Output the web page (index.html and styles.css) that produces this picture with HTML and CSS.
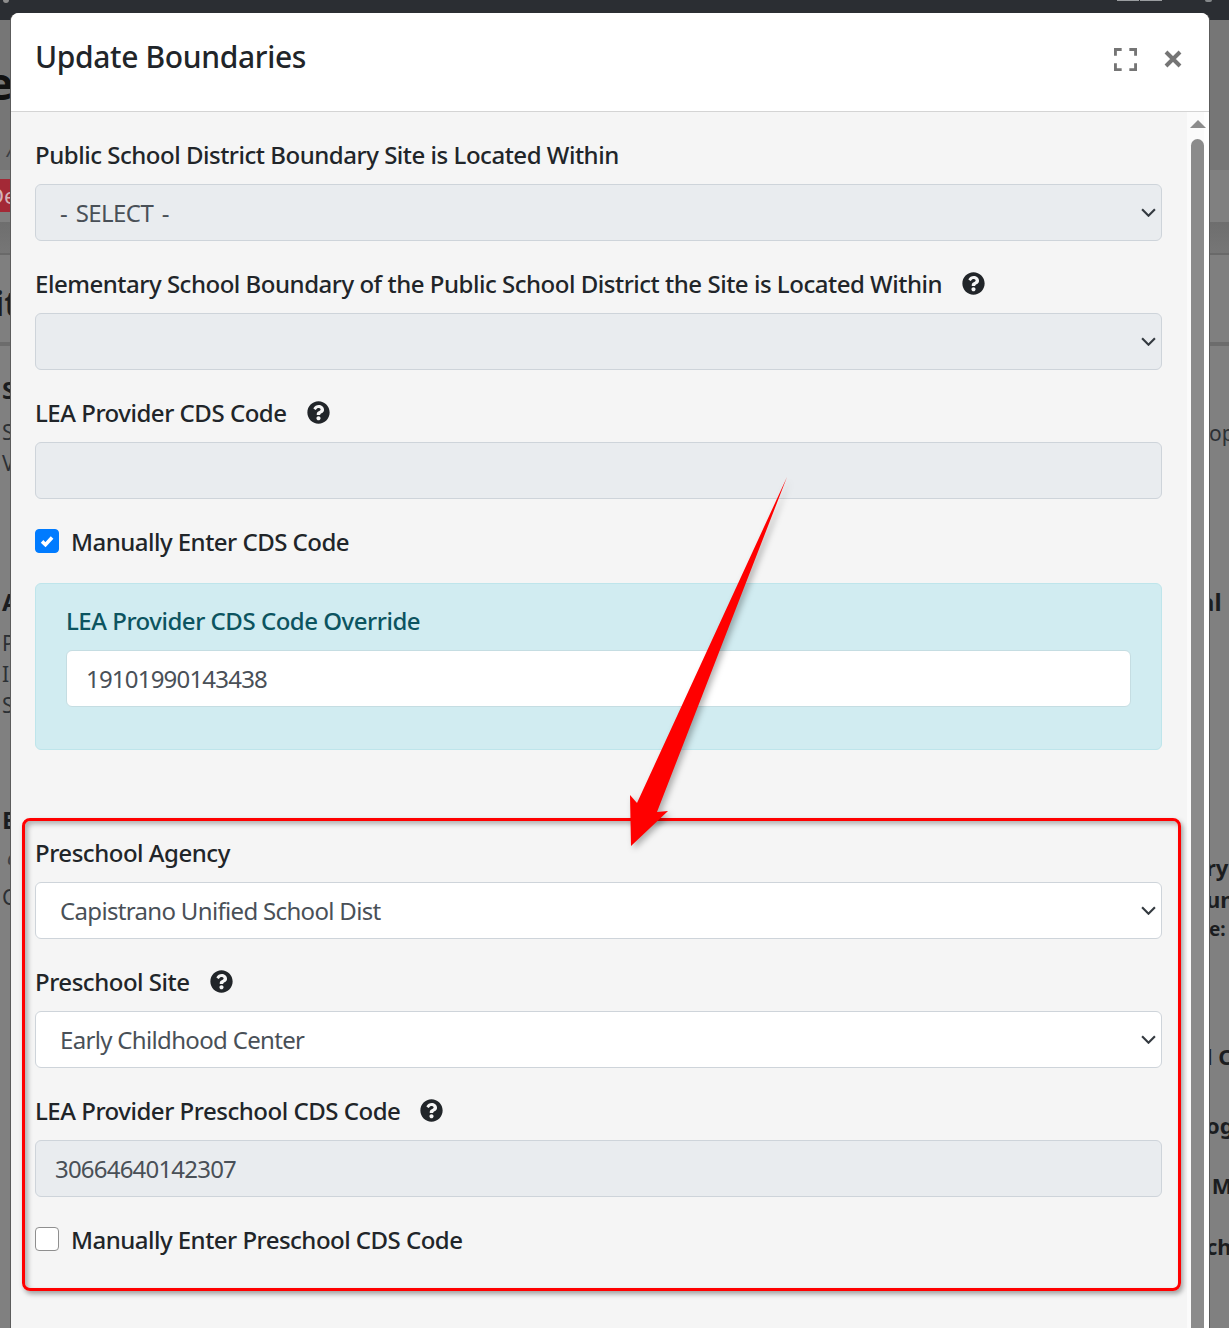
FILE: index.html
```html
<!DOCTYPE html>
<html lang="en">
<head>
<meta charset="utf-8">
<title>Update Boundaries</title>
<link rel="stylesheet" href="styles.css">
</head>
<body>
<div class="page">
  <div class="side side-left">
    <span class="frag big l1">e</span>
    <span class="frag small-i l2">A</span>
    <span class="badge">De</span>
    <span class="frag head l3">it</span>
    <span class="frag sub l4">S</span>
    <span class="frag text l5">S</span>
    <span class="frag text l6">V</span>
    <span class="frag sub l7">A</span>
    <span class="frag text l8">P</span>
    <span class="frag text l6">In</span>
    <span class="frag text l6">S</span>
    <span class="frag sub l9">E</span>
    <span class="frag small-i l10">a</span>
    <span class="frag text l11">C</span>
  </div>
  <div class="side side-right">
    <span class="frag text r1">op</span>
    <span class="frag sub r2">al</span>
    <span class="frag strong r3">ry</span>
    <span class="frag strong r4">un</span>
    <span class="frag minor">e:</span>
    <span class="frag strong r5">l C</span>
    <span class="frag strong r6">og</span>
    <span class="frag strong r7">&nbsp;M</span>
    <span class="frag strong r8">ch</span>
  </div>
</div>

<div class="nav-marks">
  <span class="nav-diamond"></span>
  <span class="nav-bar"></span>
  <span class="nav-bar"></span>
  <span class="nav-dot"></span>
</div>

<section class="modal">
  <header class="modal-header">
    <h1 class="modal-title">Update Boundaries</h1>
    <div class="modal-actions">
      <svg class="icon-expand" viewBox="0 0 24 24" aria-hidden="true"><path d="M1.5 8V1.5H8M16 1.5h6.5V8M22.5 16v6.5H16M8 22.5H1.5V16"/></svg>
      <svg class="icon-close" viewBox="0 0 18 18" aria-hidden="true"><path d="M2 2l14 14M16 2L2 16"/></svg>
    </div>
  </header>
  <div class="modal-main">
    <form class="modal-body">
      <div class="group">
        <label class="label">Public School District Boundary Site is Located Within</label>
        <select class="field select readonly" disabled><option>- SELECT -</option></select>
      </div>
      <div class="group">
        <label class="label">Elementary School Boundary of the Public School District the Site is Located Within
          <svg class="help" viewBox="0 0 512 512" aria-hidden="true"><use href="#q"/></svg></label>
        <select class="field select readonly" disabled><option></option></select>
      </div>
      <div class="group">
        <label class="label">LEA Provider CDS Code
          <svg class="help" viewBox="0 0 512 512" aria-hidden="true"><use href="#q"/></svg></label>
        <input class="field readonly" disabled value="">
      </div>
      <div class="check-row">
        <span class="box box-on"><svg viewBox="0 0 16 16" aria-hidden="true"><path d="M4.4 8.3l2.5 2.4 4.8-5.2"/></svg></span>
        <span class="check-label">Manually Enter CDS Code</span>
      </div>
      <div class="override">
        <label class="label label-info">LEA Provider CDS Code Override</label>
        <input class="field" value="19101990143438">
      </div>
      <div class="group">
        <label class="label">Preschool Agency</label>
        <select class="field select"><option>Capistrano Unified School Dist</option></select>
      </div>
      <div class="group">
        <label class="label">Preschool Site
          <svg class="help" viewBox="0 0 512 512" aria-hidden="true"><use href="#q"/></svg></label>
        <select class="field select"><option>Early Childhood Center</option></select>
      </div>
      <div class="group">
        <label class="label">LEA Provider Preschool CDS Code
          <svg class="help" viewBox="0 0 512 512" aria-hidden="true"><use href="#q"/></svg></label>
        <input class="field readonly" disabled value="30664640142307">
      </div>
      <div class="check-row">
        <span class="box"></span>
        <span class="check-label">Manually Enter Preschool CDS Code</span>
      </div>
    </form>
    <div class="scrollbar">
      <span class="scroll-arrow"></span>
      <span class="scroll-thumb"></span>
    </div>
  </div>
</section>

<div class="callout"></div>
<svg class="arrow" viewBox="620 470 180 390" aria-hidden="true">
  <polygon points="787,477 657,812 668,811 631,846 630,795 637,803"/>
</svg>

<svg class="defs" aria-hidden="true"><defs>
  <path id="q" d="M504 256c0 136.997-111.043 248-248 248S8 392.997 8 256C8 119.083 119.043 8 256 8s248 111.083 248 248zM262.655 90c-54.497 0-89.255 22.957-116.549 63.758-3.536 5.286-2.353 12.415 2.715 16.258l34.699 26.31c5.205 3.947 12.621 3.008 16.665-2.122 17.864-22.658 30.113-35.797 57.303-35.797 20.429 0 45.698 13.148 45.698 32.958 0 14.976-12.363 22.667-32.534 33.976C247.128 238.528 216 254.941 216 296v4c0 6.627 5.373 12 12 12h56c6.627 0 12-5.373 12-12v-1.333c0-28.462 83.186-29.647 83.186-106.667 0-58.002-60.165-102-116.531-102zM256 338c-25.365 0-46 20.635-46 46 0 25.364 20.635 46 46 46s46-20.636 46-46c0-25.365-20.635-46-46-46z"/>
</defs></svg>
</body>
</html>
```
FILE: styles.css
```css
* { box-sizing: border-box; }
html, body { margin: 0; height: 1328px; overflow: hidden; }
body { position: relative; font-family: "Noto Sans", "Open Sans", sans-serif; color: #212529; }

.page {
  height: 1328px;
  display: flex;
  justify-content: space-between;
  background: linear-gradient(#2b2e33 0 20px, #767676 20px 170px, #808080 170px 222px, #6e6e6e 222px, #767676 253px, #696969 253px 255px, #7f7f7f 255px 342px, #6c6c6c 342px 346px, #808080 346px);
}
.side { width: 40px; display: flex; flex-direction: column; overflow: hidden; }
.side-right { width: 20px; align-items: flex-start; }
.frag { display: block; height: 30px; line-height: 30px; white-space: nowrap; color: #1b1d20; }
.big { height: 50px; line-height: 50px; font-size: 44px; font-weight: 700; margin-left: -13px; color: #111; }
.head { font-size: 34px; font-weight: 700; margin-left: -6px; }
.sub { font-size: 24px; font-weight: 700; margin-left: 2px; }
.text { font-size: 21px; font-weight: 400; color: #2c3034; margin-left: 2px; }
.small-i { font-size: 20px; font-style: italic; color: #3b3f44; margin-left: 7px; }
.strong { font-size: 22px; font-weight: 700; margin-left: -3px; }
.minor { font-size: 19px; font-weight: 700; }

.badge { display: block; height: 33px; line-height: 33px; margin-top: 14px; background: #a32936; color: #d5b4b8; font-size: 22px; white-space: nowrap; text-indent: -12px; }

.l1 { margin-top: 58px; }
.l2 { margin-top: 27px; }
.l3 { margin-top: 71px; height: 40px; line-height: 40px; }
.l4 { margin-top: 52px; }
.l5 { margin-top: 12px; }
.l6 { margin-top: 1px; }
.l7 { margin-top: 109px; }
.l8 { margin-top: 11px; }
.l9 { margin-top: 85px; }
.l10 { margin-top: 8px; }
.l11 { margin-top: 9px; }
.r1 { margin-top: 418px; margin-left: 0; }
.r2 { margin-top: 139px; margin-left: -9px; }
.r3 { margin-top: 235px; }
.r4 { margin-top: 2px; }
.r5 { margin-top: 97px; }
.r6 { margin-top: 39px; }
.r7 { margin-top: 30px; }
.r8 { margin-top: 31px; }

.nav-marks {
  position: absolute;
  left: 3px;
  top: 0;
  width: 1209px;
  display: flex;
  align-items: flex-start;
  gap: 1px;
}
.nav-diamond { width: 6px; height: 3px; margin-right: auto; background: #8e8e8e; border-radius: 0 0 3px 3px; }
.nav-bar { width: 22px; height: 1px; background: #9a9da0; }
.nav-dot { width: 7px; height: 2px; margin-left: 42px; background: #85888b; border-radius: 0 0 4px 4px; }

.modal {
  position: absolute;
  left: 11px;
  top: 13px;
  width: 1198px;
  height: 1315px;
  display: flex;
  flex-direction: column;
  background: #f5f5f5;
  border-radius: 8px 8px 0 0;
  box-shadow: -1px 0 0 #5c5c5c, 1px 0 0 #5c5c5c;
  overflow: hidden;
}
.modal-header {
  height: 99px;
  flex: none;
  display: flex;
  align-items: center;
  justify-content: space-between;
  padding: 0 27px 12px 24px;
  background: #fff;
  border-bottom: 1px solid #d4d4d4;
}
.modal-title { margin: 0; font-size: 30px; line-height: 45px; font-weight: 500; letter-spacing: -0.35px; }
.modal-actions { display: flex; align-items: center; gap: 27px; padding-top: 6px; }
.icon-expand { width: 23px; height: 23px; fill: none; stroke: #757575; stroke-width: 3; }
.icon-close { width: 18px; height: 18px; fill: none; stroke: #757575; stroke-width: 4; }

.modal-main { flex: 1; display: flex; min-height: 0; }
.modal-body { flex: 1; padding: 24px 25px 0 24px; }
.group { margin-bottom: 24px; }
.label { display: flex; align-items: center; gap: 20px; height: 36px; margin-bottom: 12px; padding-top: 1px; font-size: 24px; font-weight: 500; letter-spacing: -0.48px; white-space: nowrap; }
.help { width: 23px; height: 23px; fill: #212529; }
.field {
  display: block;
  width: 100%;
  height: 57px;
  padding: 0 19px;
  background: #fff;
  border: 1px solid #ced4da;
  border-radius: 6px;
  font: 400 24px "Noto Sans", "Open Sans", sans-serif;
  letter-spacing: -0.8px;
  color: #495057;
  opacity: 1;
}
.select {
  appearance: none;
  padding-left: 24px;
  letter-spacing: -0.67px;
  background-image: url("data:image/svg+xml,%3Csvg xmlns='http://www.w3.org/2000/svg' viewBox='0 0 14 8'%3E%3Cpath d='M1 1l6 6 6-6' fill='none' stroke='%23343a40' stroke-width='2'/%3E%3C/svg%3E");
  background-repeat: no-repeat;
  background-position: right 5px top 23px;
  background-size: 15px 9px;
}
.readonly { background-color: #e9ecef; }
.select.readonly { letter-spacing: -0.6px; word-spacing: 3px; }

.check-row { display: flex; align-items: center; gap: 12px; height: 36px; margin-bottom: 24px; }
.box { width: 24px; height: 24px; flex: none; background: #fff; border: 1px solid #8f8f8f; border-radius: 4px; display: flex; }
.box-on { background: #007bff; border-color: #007bff; }
.box svg { width: 100%; height: 100%; fill: none; stroke: #fff; stroke-width: 2.6; }
.check-label { font-size: 24px; font-weight: 500; letter-spacing: -0.52px; white-space: nowrap; }

.override {
  margin-bottom: 84px;
  padding: 18px 30px 0;
  height: 167px;
  background: #d1ecf1;
  border: 1px solid #bee5eb;
  border-radius: 6px;
}
.override .field { border-color: #c5dde2; }
.label-info { color: #0c5460; }

.scrollbar { width: 22px; flex: none; padding: 8px 0 0 4px; background: #fbfbfb; border-right: 5px solid #fff; display: flex; flex-direction: column; align-items: center; }
.scroll-arrow { width: 0; height: 0; border-left: 8px solid transparent; border-right: 8px solid transparent; border-bottom: 8px solid #8c8c8c; flex: none; }
.scroll-thumb { width: 13px; flex: 1; margin-top: 11px; background: #8b8b8b; border-radius: 7px 7px 0 0; }

.callout {
  position: absolute;
  left: 22px;
  top: 818px;
  width: 1159px;
  height: 473px;
  border: 3px solid #f00;
  border-radius: 8px;
  box-shadow: 2px 3px 5px rgba(0,0,0,.35), inset 3px 3px 5px rgba(0,0,0,.28);
}
.arrow {
  position: absolute;
  left: 620px;
  top: 470px;
  width: 180px;
  height: 390px;
  overflow: visible;
  fill: #f00;
  filter: drop-shadow(3px 3px 3px rgba(0,0,0,.3));
}
.defs { position: absolute; width: 0; height: 0; }
```
